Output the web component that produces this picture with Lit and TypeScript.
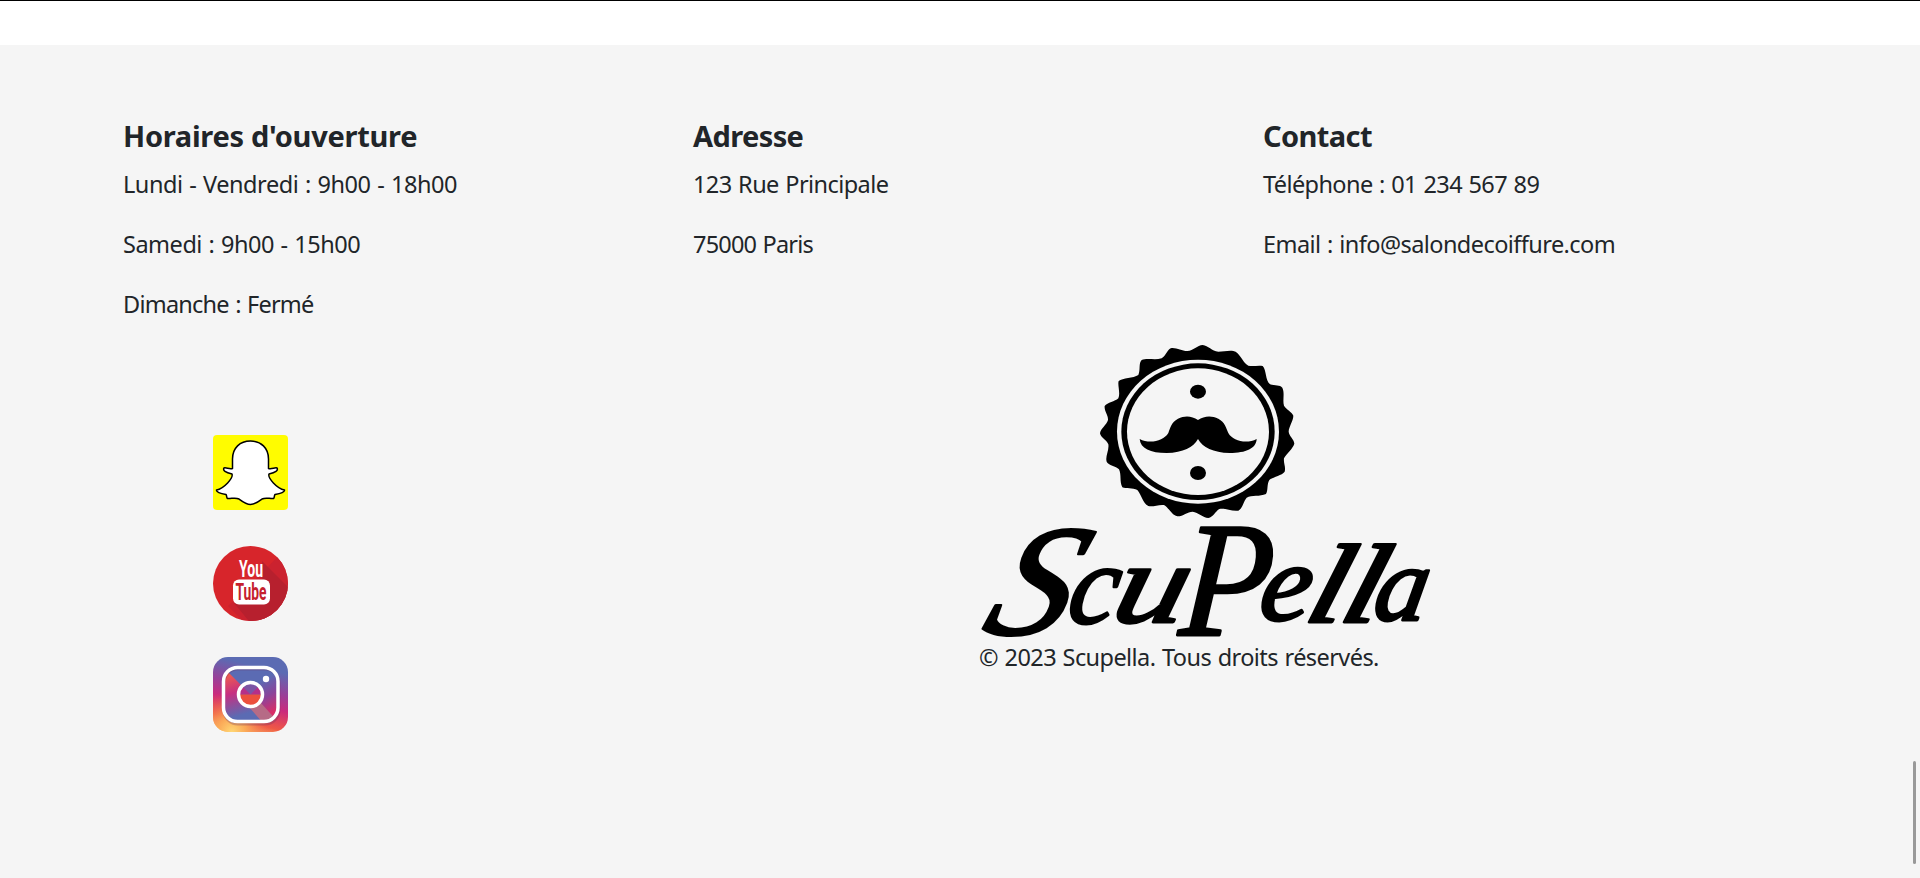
import { LitElement, html, css, svg } from "lit";
import { customElement } from "lit/decorators.js";

interface Line { text: string; spacing: number }
interface Column { title: string; spacing: number; lines: Line[] }

const columns: Column[] = [
  { title: "Horaires d'ouverture", spacing: -0.28, lines: [
    { text: "Lundi - Vendredi : 9h00 - 18h00", spacing: -0.45 },
    { text: "Samedi : 9h00 - 15h00", spacing: -0.48 },
    { text: "Dimanche : Fermé", spacing: -0.77 } ] },
  { title: "Adresse", spacing: -0.6, lines: [
    { text: "123 Rue Principale", spacing: -0.58 },
    { text: "75000 Paris", spacing: -0.8 } ] },
  { title: "Contact", spacing: -0.6, lines: [
    { text: "Téléphone : 01 234 567 89", spacing: -0.6 },
    { text: "Email : info@salondecoiffure.com", spacing: -0.57 } ] },
];

// character, x, baseline, size, horizontal scale, skew
const letters: [string, number, number, number, number, number][] = [
  ["S", 1, 294, 158, 1.04, -20], ["c", 87, 283, 114, 0.97, -10], ["u", 131, 282, 114, 1.27, -14],
  ["P", 200, 295, 164, 0.92, -4], ["e", 279, 280, 110, 1.05, -8], ["l", 324, 282, 112, 1.25, -16],
  ["l", 359, 282, 112, 1.25, -16], ["a", 393, 280, 106, 1, -10],
];

@customElement("app-root")
export class AppRoot extends LitElement {
  static styles = css`
    :host { display: block; box-sizing: border-box; height: 878px; overflow: hidden; position: relative;
      background: #fff; border-top: 1px solid #000; padding-top: 44px;
      font-family: "Segoe UI", "Noto Sans", "Open Sans", sans-serif; font-size: 23.5px; line-height: 36px; color: #212529; }
    footer { box-sizing: border-box; height: 833px; background: #f5f5f5; padding: 73px 87px 0 123px; }
    .info { display: grid; grid-template-columns: repeat(3, 1fr); height: 222px; }
    h2 { margin: 0 0 13px; font-size: 29px; line-height: 35px; font-weight: 700; white-space: nowrap; }
    p { margin: 0 0 24px; white-space: nowrap; word-spacing: 1px; }
    .bottom { display: grid; grid-template-columns: 1fr 1fr; }
    .social { display: flex; flex-direction: column; gap: 36px; padding: 95px 0 0 90px; }
    .social svg { width: 75px; height: 75px; display: block; }
    .logo { display: block; width: 450px; height: 299px; overflow: visible; }
    .word { font-family: "Liberation Serif", serif; font-style: italic; font-weight: 400;
      fill: #000; stroke: #000; stroke-width: 2.8px; stroke-linejoin: round; }
    .copy { letter-spacing: -0.57px; padding-left: 1px; }
    .yt { font-family: "Roboto", sans-serif; font-weight: 700; }
    .thumb { position: absolute; right: 4px; top: 760px; width: 3px; height: 103px; border-radius: 2px; background: #999; }
  `;

  private snapchat() {
    return html`<svg viewBox="0 0 75 75" aria-label="Snapchat">
      <rect width="75" height="75" rx="4" fill="#fffc00"/>
      <path d="M37.500 6C27 6 19.500 13 19.500 24V33.500C16.500 34.500 13 32.200 11 33C9.500 35.500 12.500 37.500 19 39C20.500 43 11 53.500 3.500 55C3 57 7 58.500 13 59.500C14 61 13.500 63 14.500 63.500C18 64 22 62 26 64C30 67 33 69.500 37.500 69.500C42 69.500 45 67 49 64C53 62 57 64 60.500 63.500C61.500 63 61 61 62 59.500C68 58.500 72 57 71.500 55C64 53.500 54.500 43 56 39C62.500 37.500 65.500 35.500 64 33C62 32.200 58.500 34.500 55.500 33.500V24C55.500 13 48 6 37.500 6Z" fill="#fff" stroke="#000" stroke-width="1.500" stroke-linejoin="round"/>
    </svg>`;
  }

  private youtube() {
    return html`<svg viewBox="0 0 75 75" aria-label="YouTube">
      <defs><clipPath id="disc"><circle cx="37.500" cy="37.500" r="37.500"/></clipPath></defs>
      <g clip-path="url(#disc)">
        <rect width="75" height="75" fill="#d7252b"/>
        <path d="M75 0L48 28L15 60L30 75H75Z" fill="#cb222f"/>
        <path d="M49 15L85 51V80H40L21 57L50 50Z" fill="#b7202e"/>
      </g>
      <rect x="20" y="33.500" width="37" height="25" rx="6" fill="#fff"/>
      <text class="yt" x="26" y="31" font-size="24" textLength="24" lengthAdjust="spacingAndGlyphs" fill="#fff">You</text>
      <text class="yt" x="22.500" y="54" font-size="23" textLength="31" lengthAdjust="spacingAndGlyphs" fill="#c5202d">Tube</text>
    </svg>`;
  }

  private instagram() {
    return html`<svg viewBox="0 0 75 75" aria-label="Instagram">
      <defs>
        <linearGradient id="ig" x1="0.600" y1="0" x2="0.350" y2="1">
          <stop offset="0.120" stop-color="#5b6bb3"/><stop offset="0.400" stop-color="#9a3f98"/>
          <stop offset="0.600" stop-color="#ca2a7d"/><stop offset="0.850" stop-color="#ef5845"/><stop offset="1" stop-color="#fbc768"/>
        </linearGradient>
        <radialGradient id="warm" cx="0.250" cy="1" r="0.550"><stop offset="0" stop-color="#ffd774"/><stop offset="0.350" stop-color="#fba857"/><stop offset="1" stop-color="#ec4b4b" stop-opacity="0"/></radialGradient>
        <linearGradient id="in" x1="0.300" y1="0" x2="0.900" y2="1"><stop offset="0.350" stop-color="#5b6bb3"/><stop offset="0.600" stop-color="#8b449b"/><stop offset="0.850" stop-color="#d92d68"/></linearGradient>
        <linearGradient id="tri" x1="0.100" y1="0" x2="0.400" y2="1"><stop offset="0.100" stop-color="#f2604a"/><stop offset="0.450" stop-color="#c62f82"/><stop offset="0.850" stop-color="#5b6bb3"/></linearGradient>
        <clipPath id="box"><rect x="10" y="10" width="56" height="56" rx="14"/></clipPath>
      </defs>
      <rect width="75" height="75" rx="15" fill="url(#ig)"/>
      <rect width="75" height="75" rx="15" fill="url(#warm)"/>
      <g clip-path="url(#box)">
        <rect x="10" y="10" width="56" height="56" fill="url(#in)"/>
        <path d="M10 10L66 66H10Z" fill="url(#tri)"/>
        <path d="M36 50L48 46L66 66H50Z" fill="#b66b86"/>
      </g>
      <circle cx="37.500" cy="37.500" r="12" fill="#7c54a4"/>
      <path d="M28 28L37.500 37.500H25.500Z" fill="#b52f88"/>
      <path d="M37.500 37.500L46 29L49.500 37.500Z" fill="#b52f88"/>
      <path d="M25.500 37.500H49.500A12 12 0 0 1 25.500 37.500Z" fill="#ec503d"/>
      <rect x="11" y="12" width="55" height="55" rx="14" fill="none" stroke="#6d315f" stroke-opacity="0.300" stroke-width="3"/>
      <rect x="10.500" y="10.500" width="54.500" height="54" rx="14" fill="none" stroke="#fff" stroke-width="3.500"/>
      <circle cx="37.500" cy="37.500" r="12" fill="none" stroke="#fff" stroke-width="3.500"/>
      <circle cx="53" cy="22" r="3.200" fill="#fff"/>
    </svg>`;
  }

  private logo() {
    return html`<svg class="logo" viewBox="0 0 450 299" aria-label="ScuPella">
      <g transform="translate(112 -5) scale(0.33333)">
        <path d="M338 30C355 32 365 48 385 50C400 50 415 46 430 48C450 52 455 80 475 92C490 95 505 90 518 93C530 105 525 135 540 148C555 152 570 150 577 158C585 175 577 195 582 212C590 225 605 230 610 242C610 258 596 275 596 290C598 305 612 312 613 326C608 342 590 355 582 370C580 385 588 395 584 410C575 422 550 425 538 435C530 448 535 465 528 477C510 485 485 480 470 488C460 500 458 520 445 527C425 530 405 518 388 522C375 530 370 546 355 549C338 548 325 532 308 530C292 530 278 545 262 544C245 540 238 520 222 510C205 508 190 516 175 513C158 505 155 480 142 465C128 458 108 462 97 457C88 440 95 420 87 403C78 392 55 392 50 380C45 365 58 345 55 328C50 315 32 308 30 295C32 280 50 270 54 255C55 240 42 228 44 213C52 202 75 200 85 190C92 175 82 150 86 138C98 128 130 130 145 120C152 105 145 85 155 75C170 68 195 76 215 70C230 60 232 42 245 39C262 38 275 48 292 48C310 48 322 30 338 30Z"/>
        <ellipse cx="324" cy="290" rx="243" ry="216" fill="#f5f5f5"/>
        <ellipse cx="324" cy="290" rx="230" ry="205"/>
        <ellipse cx="324" cy="290" rx="213" ry="190" fill="#f5f5f5"/>
        <ellipse cx="324" cy="170" rx="24" ry="21"/><ellipse cx="324" cy="414" rx="24" ry="21"/>
        <path d="M324 255C306 243 285 241 264 251C244 261 240 281 235 294C221 318 179 328 149 312C151 340 181 354 230 354C280 353 310 337 324 312C338 337 369 353 419 354C468 354 499 340 500 312C470 328 428 318 415 294C409 281 405 261 385 251C364 241 342 243 324 255Z"/>
      </g>
      ${letters.map(([c, x, y, size, sx, skew]) => svg`<text class="word" font-size=${size} transform=${`translate(${x} ${y}) skewX(${skew}) scale(${sx} 1)`}>${c}</text>`)}
    </svg>`;
  }

  render() {
    return html`
      <footer>
        <section class="info">
          ${columns.map(c => html`<div>
            <h2 style="letter-spacing:${c.spacing}px">${c.title}</h2>
            ${c.lines.map(l => html`<p style="letter-spacing:${l.spacing}px">${l.text}</p>`)}
          </div>`)}
        </section>
        <section class="bottom">
          <div class="social">${this.snapchat()}${this.youtube()}${this.instagram()}</div>
          <div>${this.logo()}<p class="copy">© 2023 Scupella. Tous droits réservés.</p></div>
        </section>
      </footer>
      <div class="thumb"></div>`;
  }
}
